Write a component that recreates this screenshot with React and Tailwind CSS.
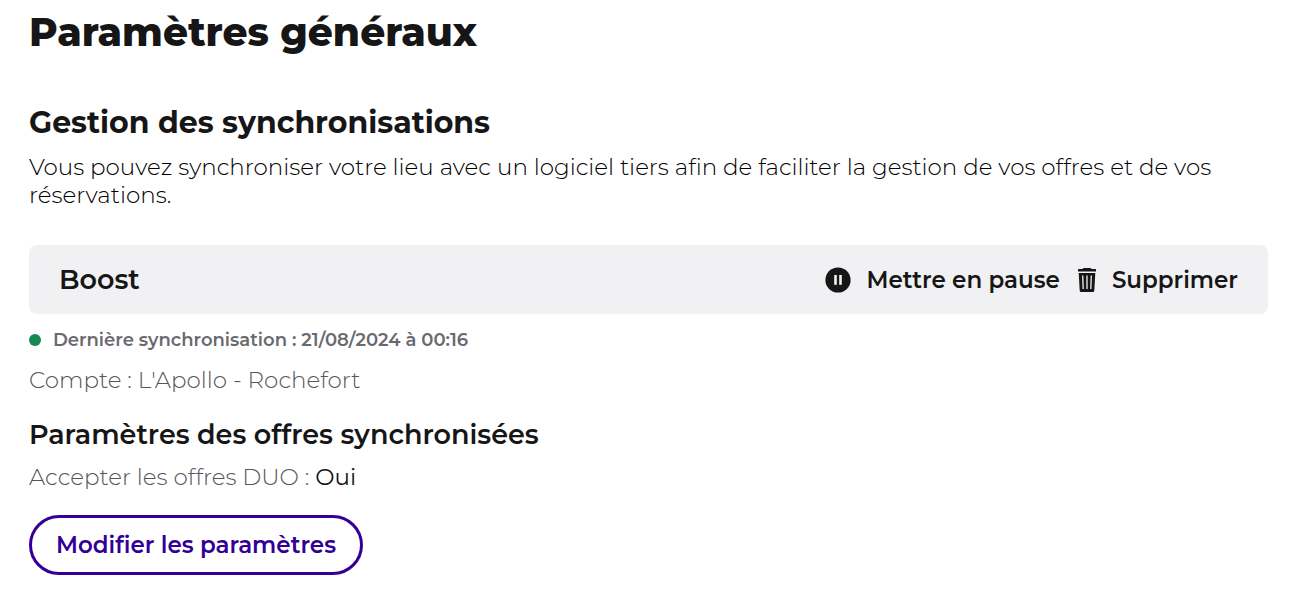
import React from 'react'

const PauseIcon = () => (
  <svg viewBox="0 0 26 26" className="h-[26px] w-[26px]" fill="currentColor" aria-hidden="true">
    <circle cx="13" cy="13" r="12.6" />
    <rect x="9.200" y="8" width="2.600" height="9.800" fill="#f1f1f4" />
    <rect x="14.200" y="8" width="2.600" height="9.800" fill="#f1f1f4" />
  </svg>
)

const TrashIcon = () => (
  <svg viewBox="0 0 18 24" className="h-6 w-[18px]" fill="currentColor" aria-hidden="true">
    <path d="M5.500 0h7l1 1H17.500a.5.5 0 0 1 .5.5V3.500H0V1.500A.5.5 0 0 1 .5 1H4.500z" />
    <path d="M.7 5h16.600l-1 17.500a1.500 1.500 0 0 1-1.500 1.500H3.200a1.500 1.500 0 0 1-1.500-1.500z" />
    <path d="M4.700 7.500l.5 13.500M9 7.500V21M13.300 7.500l-.5 13.500" stroke="#f1f1f4" strokeWidth="1.300" fill="none" />
  </svg>
)

const actions = [
  { label: 'Mettre en pause', icon: PauseIcon },
  { label: 'Supprimer', icon: TrashIcon }
]

const App = () => {
  return (
    <main className="bg-white px-[29px] pt-1 pb-4 font-['Montserrat','Open_Sans',sans-serif] text-[#161617]">
      <h1 className="text-[39px] leading-[56px] font-extrabold">Paramètres généraux</h1>

      <section className="mt-[45px] mr-3">
        <h2 className="text-[30px] leading-9 font-bold">Gestion des synchronisations</h2>
        <p className="mt-3 text-[23px] leading-7 font-light text-black">
          Vous pouvez synchroniser votre lieu avec un logiciel tiers afin de faciliter la gestion de vos offres et de vos réservations.
        </p>

        {/* Provider */}
        <div className="mt-9 flex items-center justify-between rounded-lg bg-[#f1f1f4] px-[30px] py-4">
          <h3 className="text-[27px] leading-[37px] font-semibold">Boost</h3>
          <div className="flex items-center gap-[18px]">
            {actions.map((a) => (
              <button key={a.label} type="button" className="flex items-center gap-4 text-[23px] leading-7 font-semibold">
                <a.icon />
                {a.label}
              </button>
            ))}
          </div>
        </div>

        <p className="mt-3 flex items-center gap-3 text-[18px] leading-7 font-semibold text-[#696a6f]">
          <span className="h-3 w-3 rounded-full bg-[#138a4f]" />
          Dernière synchronisation : 21/08/2024 à 00:16
        </p>
        <p className="mt-3 text-[23px] leading-7 font-light text-[#55565b]">Compte : L'Apollo - Rochefort</p>

        {/* Offer settings */}
        <h3 className="mt-[23px] text-[27px] leading-9 font-semibold">Paramètres des offres synchronisées</h3>
        <p className="mt-[10px] text-[23px] leading-7 font-light text-[#55565b]">
          Accepter les offres DUO : <span className="font-normal text-[#161617]">Oui</span>
        </p>
        <button
          type="button"
          className="mt-6 rounded-full border-3 border-[#320096] px-6 py-3 text-[23px] leading-[30px] font-semibold text-[#320096]"
        >
          Modifier les paramètres
        </button>
      </section>
    </main>
  )
}

export default App
